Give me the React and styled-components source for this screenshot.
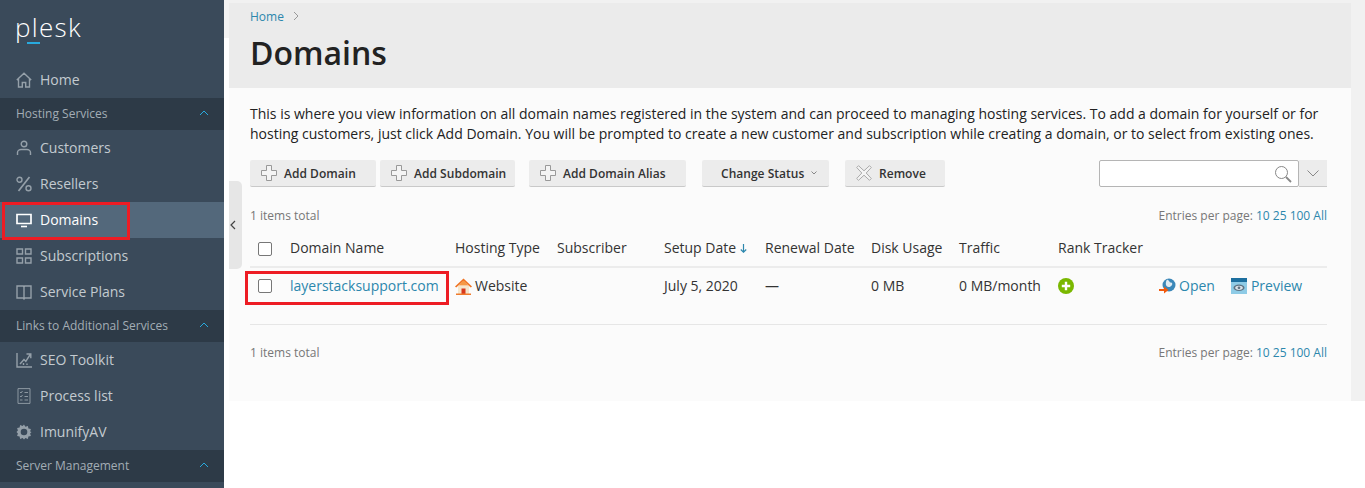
import React from "react";
import styled, { createGlobalStyle } from "styled-components";

const Global = createGlobalStyle`
  html, body { margin: 0; padding: 0; background: #fff; height: 100%; overflow: hidden; }
  * { box-sizing: border-box; }
  body { font-family: "Open Sans", "Liberation Sans", sans-serif; }
`;

const Page = styled.div`
  display: flex;
  width: 1365px;
  height: 488px;
  overflow: hidden;
`;

const Sidebar = styled.nav`
  width: 224px;
  flex: none;
  background: #3a4a5a;
  color: #c3cad0;
`;

const LogoRow = styled.div`
  height: 62px;
  padding: 5px 0 0 15px;
`;

const Logo = styled.div`
  position: relative;
  display: inline-block;
  font-size: 26px;
  font-weight: 300;
  line-height: 44px;
  color: #fff;
  letter-spacing: 1.3px;
  &::after {
    content: "";
    position: absolute;
    left: 12px;
    top: 37px;
    width: 13px;
    height: 2px;
    background: #28aade;
  }
`;

const NavItem = styled.a`
  position: relative;
  display: flex;
  align-items: center;
  height: 36px;
  padding: 0 0 0 16px;
  gap: 8px;
  font-size: 14px;
  font-weight: 500;
  line-height: 34px;
  color: ${(p) => (p.$active ? "#fff" : "#c3cad0")};
  background: ${(p) => (p.$active ? "#53687b" : "transparent")};
  svg { flex: none; }
`;

const SectionHead = styled.div`
  display: flex;
  align-items: center;
  justify-content: space-between;
  height: 32px;
  padding: 0 15px 2px 16px;
  background: #2d3a47;
  font-size: 12px;
  font-weight: 400;
  color: #a3adb5;
`;

const RedBox = styled.span`
  position: absolute;
  border: 3px solid #ed1c24;
  pointer-events: none;
  left: ${(p) => p.$left}px;
  top: ${(p) => p.$top}px;
  width: ${(p) => p.$w}px;
  height: ${(p) => p.$h}px;
`;

const Frame = styled.main`
  position: relative;
  flex: 1;
  height: 401px;
  padding: 3px 14px 0 5px;
  background-image: linear-gradient(#f2f2f2 38px, #fff 38px);
  background-size: 5px 100%;
  background-repeat: no-repeat;
  background-color: #f1f1f1;
`;

const Panel = styled.div`
  height: 398px;
  background: #fbfbfb;
`;

const Header = styled.header`
  height: 85px;
  background: #ebebeb;
  padding: 5px 21px 0;
`;

const Crumbs = styled.div`
  display: flex;
  align-items: center;
  gap: 9px;
  height: 16px;
  font-size: 12px;
  color: #2c87ad;
`;

const Title = styled.h1`
  margin: 7px 0 0;
  font-size: 32px;
  line-height: 44px;
  font-weight: 600;
  color: #222;
`;

const Content = styled.section`
  padding: 16px 24px 0 21px;
`;

const Intro = styled.p`
  margin: 0;
  font-size: 14px;
  line-height: 20px;
  color: #222;
  white-space: nowrap;
`;

const Toolbar = styled.div`
  display: flex;
  margin-top: 16px;
  height: 27px;
`;

const Btn = styled.button`
  display: flex;
  align-items: center;
  gap: 7px;
  width: ${(p) => p.$w}px;
  margin-left: ${(p) => p.$ml || 0}px;
  height: 27px;
  padding: 0 0 0 ${(p) => p.$pl || 11}px;
  border: 0;
  border-bottom: 1px solid #c9c9c9;
  border-radius: 2px;
  background: #ececec;
  font-family: inherit;
  font-size: 12px;
  font-weight: 600;
  letter-spacing: 0.03px;
  color: #333;
`;

const Search = styled.div`
  display: flex;
  margin-left: auto;
`;

const SearchBox = styled.div`
  display: flex;
  align-items: center;
  justify-content: flex-end;
  width: 200px;
  height: 27px;
  padding-right: 6px;
  background: #fff;
  border: 1px solid #b5b5b5;
  border-radius: 2px;
`;

const SearchDrop = styled.div`
  display: flex;
  align-items: center;
  justify-content: center;
  width: 28px;
  height: 27px;
  background: #ececec;
  border-bottom: 1px solid #c9c9c9;
`;

const Pager = styled.div`
  display: flex;
  justify-content: space-between;
  height: 18px;
  margin-top: ${(p) => p.$mt}px;
  font-size: 12px;
  line-height: 18px;
  color: #777;
`;

const PageLinks = styled.span`
  color: #2c87ad;
`;

const Table = styled.table`
  width: 1077px;
  margin-top: 5px;
  border-collapse: collapse;
  table-layout: fixed;
  font-size: 14px;
  color: #333;
`;

const Th = styled.th`
  height: 37px;
  padding: 0 0 1px 8px;
  text-align: left;
  font-weight: 400;
  white-space: nowrap;
  border-bottom: 2px solid #ececec;
`;

const Row = styled.tr`
  height: 57px;
  border-bottom: 1px solid #e6e6e6;
`;

const Td = styled.td`
  position: relative;
  padding: 8px 0 0 8px;
  height: 57px;
  vertical-align: top;
  line-height: 20px;
  white-space: nowrap;
`;

const Check = styled.span`
  display: block;
  width: 14px;
  height: 14px;
  margin-top: 3px;
  background: #fff;
  border: 1px solid #777;
  border-radius: 2px;
`;

const Link = styled.a`
  color: #2c87ad;
`;

const WithIcon = styled.span`
  display: inline-flex;
  align-items: center;
  gap: ${(p) => p.$gap || 3}px;
`;

const BadgeCell = styled.span`
  display: block;
  padding-top: 2px;
`;

const Actions = styled.span`
  display: inline-flex;
  gap: 16px;
`;

const Handle = styled.div`
  position: absolute;
  left: 5px;
  top: 181px;
  width: 13px;
  height: 88px;
  display: flex;
  align-items: center;
  padding-left: 1px;
  background: #e6e6e6;
  border-radius: 0 5px 5px 0;
`;

const Icon = ({ children, s = 16, vb = 16 }) => (
  <svg width={s} height={s} viewBox={`0 0 ${vb} ${vb}`} fill="none" stroke="#95a0a9" strokeWidth="1.4">
    {children}
  </svg>
);

const Chevron = () => (
  <svg width="10" height="6" viewBox="0 0 10 6" fill="none" stroke="#28aade" strokeWidth="1">
    <path d="M1 5l4-4 4 4" />
  </svg>
);

const Plus = () => (
  <svg width="16" height="16" viewBox="0 0 16 16" fill="#f4f4f4" stroke="#999" strokeWidth="1">
    <path d="M5.5.5h5v5h5v5h-5v5h-5v-5h-5v-5h5z" />
  </svg>
);

const Nav = ({ icon, label, active }) => (
  <NavItem $active={active}>
    {icon}
    {label}
  </NavItem>
);

const HomeI = (
  <Icon>
    <path d="M.8 8L8 1.2 15.2 8M2.500 6.500V15h3.800v-4.500h3.400V15h3.800V6.500" />
  </Icon>
);
const UserI = (
  <Icon>
    <circle cx="8" cy="4" r="2.800" />
    <path d="M1.500 15v-2.500c0-2 2-3 3.500-3h6c1.500 0 3.500 1 3.500 3V15" />
  </Icon>
);
const PercentI = (
  <Icon>
    <circle cx="3.500" cy="3.800" r="2.500" />
    <circle cx="12.500" cy="12.200" r="2.500" />
    <path d="M13.500 1L2.500 15" strokeWidth="1.700" />
  </Icon>
);
const MonitorI = (
  <svg width="16" height="16" viewBox="0 0 16 16" fill="none" stroke="#fff">
    <path d="M1 2.500h14v9H1z" strokeWidth="1.700" />
    <path d="M5 14.500h6" strokeWidth="1.600" />
  </svg>
);
const GridI = (
  <Icon>
    <path d="M1 1h5.500v5H1zM9.500 1H15v5H9.500zM1 10h5.500v5H1zM9.500 10H15v5H9.500z" />
  </Icon>
);
const BookI = (
  <Icon>
    <path d="M1 2h6.300L8 3l.7-1H15v12H8.800l-.8 1-.8-1H1zM8 3v11" />
  </Icon>
);
const ChartI = (
  <Icon>
    <path d="M1 1v14h15" />
    <path d="M4 12l4-4.500 1.800 1.800L14.500 2M10.500 2h4.300v4.300" />
    <path d="M7.500 13v-2M11 13v-1.500" />
  </Icon>
);
const ListI = (
  <svg width="16" height="16" viewBox="0 0 16 16" fill="none" stroke="#95a0a9" strokeWidth="0.9">
    <path d="M2 .6h12v14.800H2z" />
    <path d="M4 4l1 1 1.500-2M4 8l1 1 1.500-2M4 12h2.500M8.500 4.500h3.500M8.500 8.500h3.500M8.500 12h3.500" />
  </svg>
);
const GearI = (
  <svg width="16" height="16" viewBox="0 0 16 16" fill="#95a0a9" stroke="none">
    <path d="M8 .5l1.400 2.200 2.500-.8.500 2.500 2.500.5-.8 2.500L15.500 8l-1.400 1.400.8 2.500-2.500.500-.5 2.500-2.500-.8L8 15.500l-1.400-1.400-2.500.8-.5-2.500-2.500-.5.8-2.500L.5 8l1.400-1.400-.8-2.500 2.500-.5.5-2.500 2.500.8z" />
    <circle cx="8" cy="8" r="3.300" fill="#3a4a5a" />
  </svg>
);

const House = () => (
  <svg width="17" height="17" viewBox="0 0 17 17">
    <path d="M3 8h11v8H3z" fill="#f5e6cc" />
    <path d="M6.500 10.500h4V16h-4z" fill="#d9391c" />
    <path d="M1 15.500h15V17H1z" fill="#ef7b2c" />
    <path d="M8.500.5L17 8.500l-1.200 1L8.500 3 1.200 9.500 0 8.500z" fill="#ef7322" />
    <path d="M8.500 2.500L3.500 7.500h10z" fill="#f59a46" />
  </svg>
);

const AddGreen = () => (
  <svg width="16" height="16" viewBox="0 0 16 16">
    <circle cx="8" cy="8" r="8" fill="#7ab800" />
    <path d="M3.800 8h8.400M8 3.800v8.400" stroke="#fff" strokeWidth="2.400" />
  </svg>
);

const OpenI = () => (
  <svg width="17" height="17" viewBox="0 0 17 17">
    <circle cx="10" cy="7" r="6.500" fill="#3b87b8" />
    <path d="M8 1.500c3 1 2 3 4 3 2 .3 1.500 3-.5 4-1.500 1-3 .5-4-.5-1-1-1-4.500.5-6.500z" fill="#dfeaf2" />
    <path d="M0 11h5V8.500L9.500 12 5 15.500V13H0z" fill="#f2590d" />
  </svg>
);

const PreviewI = () => (
  <svg width="16" height="16" viewBox="0 0 16 16">
    <path d="M0 0h16v16H0z" fill="#8ecbe6" />
    <path d="M0 0h16v4H0z" fill="#1d6f9f" />
    <ellipse cx="8" cy="9.800" rx="5.500" ry="3.200" fill="#5d7282" />
    <ellipse cx="8" cy="9.800" rx="3.800" ry="2.100" fill="#dbe4ea" />
    <circle cx="8" cy="9.800" r="1.400" fill="#5d7282" />
  </svg>
);

const widths = [32, 165, 102, 107, 101, 106, 88, 99, 101, 176];

export default function App() {
  return (
    <Page>
      <Global />
      <Sidebar>
        <LogoRow>
          <Logo>plesk</Logo>
        </LogoRow>
        <Nav icon={HomeI} label="Home" />
        <SectionHead>
          Hosting Services
          <Chevron />
        </SectionHead>
        <Nav icon={UserI} label="Customers" />
        <Nav icon={PercentI} label="Resellers" />
        <NavItem $active>
          {MonitorI}
          Domains
          <RedBox $left={2} $top={0} $w={128} $h={38} />
        </NavItem>
        <Nav icon={GridI} label="Subscriptions" />
        <Nav icon={BookI} label="Service Plans" />
        <SectionHead>
          Links to Additional Services
          <Chevron />
        </SectionHead>
        <Nav icon={ChartI} label="SEO Toolkit" />
        <Nav icon={ListI} label="Process list" />
        <Nav icon={GearI} label="ImunifyAV" />
        <SectionHead>
          Server Management
          <Chevron />
        </SectionHead>
      </Sidebar>
      <Frame>
        <Panel>
          <Header>
            <Crumbs>
              <span>Home</span>
              <svg width="6" height="10" viewBox="0 0 6 10" fill="none" stroke="#999" strokeWidth="1">
                <path d="M1 1l4 4-4 4" />
              </svg>
            </Crumbs>
            <Title>Domains</Title>
          </Header>
          <Content>
            <Intro>
              This is where you view information on all domain names registered in the system and can proceed to managing hosting services. To add a domain for yourself or for
              <br />
              hosting customers, just click Add Domain. You will be prompted to create a new customer and subscription while creating a domain, or to select from existing ones.
            </Intro>
            <Toolbar>
              <Btn $w={126}><Plus />Add Domain</Btn>
              <Btn $w={135} $ml={4}><Plus />Add Subdomain</Btn>
              <Btn $w={157} $ml={14}><Plus />Add Domain Alias</Btn>
              <Btn $w={127} $ml={16} $pl={19}>
                Change Status
                <svg width="6" height="4" viewBox="0 0 6 4" fill="none" stroke="#888">
                  <path d="M.5.5L3 3 5.500.5" />
                </svg>
              </Btn>
              <Btn $w={100} $ml={16}>
                <svg width="16" height="16" viewBox="0 0 16 16" fill="#f4f4f4" stroke="#aaa">
                  <path d="M2.500.7L8 5.800 13.500.7l1.800 1.800L10.200 8l5.100 5.500-1.800 1.800L8 10.200l-5.500 5.100-1.800-1.800L5.800 8 .7 2.500z" />
                </svg>
                Remove
              </Btn>
              <Search>
                <SearchBox>
                  <svg width="18" height="18" viewBox="0 0 18 18" fill="none" stroke="#888">
                    <circle cx="7.500" cy="7.500" r="6" strokeWidth="1" />
                    <path d="M12 12l5 5" strokeWidth="1.800" />
                  </svg>
                </SearchBox>
                <SearchDrop>
                  <svg width="12" height="7" viewBox="0 0 12 7" fill="none" stroke="#888">
                    <path d="M.5.5L6 6 11.500.5" />
                  </svg>
                </SearchDrop>
              </Search>
            </Toolbar>
            <Pager $mt={20}>
              <span>1 items total</span>
              <span>Entries per page: <PageLinks>10 25 100 All</PageLinks></span>
            </Pager>
            <Table>
              <colgroup>
                {widths.map((w, i) => <col key={i} style={{ width: w }} />)}
              </colgroup>
              <thead>
                <tr>
                  <Th><Check /></Th>
                  <Th>Domain Name</Th>
                  <Th>Hosting Type</Th>
                  <Th>Subscriber</Th>
                  <Th>
                    Setup Date{" "}
                    <svg width="7" height="9" viewBox="0 0 7 9" fill="none" stroke="#2c87ad" strokeWidth="1.200">
                      <path d="M3.500 0v8M.8 5.500l2.700 2.700 2.700-2.700" />
                    </svg>
                  </Th>
                  <Th>Renewal Date</Th>
                  <Th>Disk Usage</Th>
                  <Th>Traffic</Th>
                  <Th>Rank Tracker</Th>
                  <Th />
                </tr>
              </thead>
              <tbody>
                <Row>
                  <Td>
                    <Check />
                    <RedBox $left={-5} $top={3} $w={204} $h={34} />
                  </Td>
                  <Td><Link>layerstacksupport.com</Link></Td>
                  <Td><WithIcon><House />Website</WithIcon></Td>
                  <Td />
                  <Td>July 5, 2020</Td>
                  <Td>—</Td>
                  <Td>0 MB</Td>
                  <Td>0 MB/month</Td>
                  <Td><BadgeCell><AddGreen /></BadgeCell></Td>
                  <Td>
                    <Actions>
                      <Link><WithIcon><OpenI />Open</WithIcon></Link>
                      <Link><WithIcon $gap={4}><PreviewI />Preview</WithIcon></Link>
                    </Actions>
                  </Td>
                </Row>
              </tbody>
            </Table>
            <Pager $mt={19}>
              <span>1 items total</span>
              <span>Entries per page: <PageLinks>10 25 100 All</PageLinks></span>
            </Pager>
          </Content>
        </Panel>
        <Handle>
          <svg width="6" height="10" viewBox="0 0 6 10" fill="none" stroke="#444" strokeWidth="1.200">
            <path d="M5 1L1 5l4 4" />
          </svg>
        </Handle>
      </Frame>
    </Page>
  );
}
